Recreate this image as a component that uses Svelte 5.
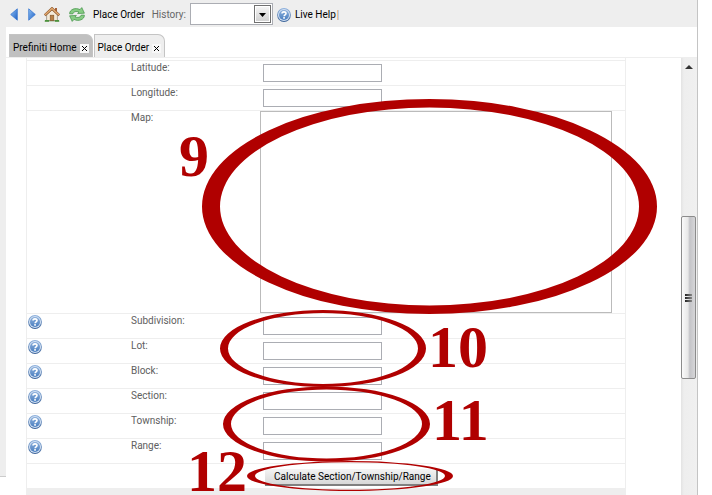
<script>
  const fields = [
    { id: 'latitude', label: 'Latitude:', help: false },
    { id: 'longitude', label: 'Longitude:', help: false },
    { id: 'map', label: 'Map:', help: false, map: true },
    { id: 'subdivision', label: 'Subdivision:', help: true },
    { id: 'lot', label: 'Lot:', help: true },
    { id: 'block', label: 'Block:', help: true },
    { id: 'section', label: 'Section:', help: true },
    { id: 'township', label: 'Township:', help: true },
    { id: 'range', label: 'Range:', help: true }
  ];
</script>

{#snippet helpIcon()}
  <svg width="14" height="14" viewBox="0 0 14 14" aria-hidden="true">
    <defs>
      <linearGradient id="ring" x1="0" y1="0" x2="0" y2="1">
        <stop offset="0" stop-color="#8fb2de" />
        <stop offset="1" stop-color="#3a6298" />
      </linearGradient>
      <linearGradient id="disc" x1="0" y1="0" x2="0" y2="1">
        <stop offset="0" stop-color="#8cb0dc" />
        <stop offset="1" stop-color="#4b7fc0" />
      </linearGradient>
    </defs>
    <circle cx="7" cy="7" r="6.9" fill="url(#ring)" />
    <circle cx="7" cy="7" r="6" fill="#d3e1f3" />
    <circle cx="7" cy="7" r="5" fill="url(#disc)" />
    <path d="M5 5.6C5 3.3 9 3.3 9 5.5C9 6.9 7.1 6.8 7.1 8.3" fill="none" stroke="#fff" stroke-width="1.6" />
    <rect x="6.2" y="9.1" width="1.7" height="1.6" fill="#fff" />
  </svg>
{/snippet}

<div class="app">
  <div class="window">
    <header class="toolbar">
      <button class="tool" aria-label="Back">
        <svg width="8" height="13" viewBox="0 0 8 13">
          <defs>
            <linearGradient id="arrow" x1="0" y1="0" x2="1" y2="1">
              <stop offset="0" stop-color="#8fc0f4" />
              <stop offset="1" stop-color="#1c5fc4" />
            </linearGradient>
          </defs>
          <path d="M7.3.8V12.2L.7 6.5Z" fill="url(#arrow)" stroke="#3b78d0" stroke-width=".8" />
        </svg>
      </button>
      <button class="tool forward" aria-label="Forward">
        <svg width="8" height="13" viewBox="0 0 8 13">
          <path d="M.7.8V12.2L7.3 6.5Z" fill="url(#arrow)" stroke="#3b78d0" stroke-width=".8" />
        </svg>
      </button>
      <button class="tool home" aria-label="Home">
        <svg width="16" height="15" viewBox="0 0 16 15">
          <path d="M0 14.2C2 12.4 14 12.4 16 14.2Z" fill="#5fa04e" />
          <rect x="11" y="1" width="2" height="4" fill="#a5623a" />
          <path d="M2.6 7.5L8 2.6L13.4 7.5V13.6H2.6Z" fill="#f4ead8" stroke="#8e8374" stroke-width=".7" />
          <path d="M.7 8.3L8 1.5L15.3 8.3" fill="none" stroke="#8a5426" stroke-width="2.6" />
          <path d="M.9 8L8 1.5L15.1 8" fill="none" stroke="#e2a870" stroke-width="1.5" />
          <rect x="6.2" y="8.2" width="3.6" height="5.4" fill="#b98046" stroke="#7d5229" stroke-width=".6" />
          <path d="M1 13.9H5M11 13.9H15" stroke="#4c913c" stroke-width="1.6" />
        </svg>
      </button>
      <button class="tool refresh" aria-label="Refresh">
        <svg width="16" height="15" viewBox="0 0 16 15">
          <g fill="#86cb83" stroke="#419146" stroke-width=".7">
            <path d="M.6 6.8C.6 2.4 6.4.2 11 2.6L12.8.6L15.4 6.2L8.6 6.6L10 5C7.4 3.9 4.2 4.6 3.8 6.9Z" />
            <path d="M15.4 8.2C15.4 12.6 9.6 14.8 5 12.4L3.2 14.4L.6 8.8L7.4 8.4L6 10C8.6 11.1 11.8 10.4 12.2 8.1Z" />
          </g>
        </svg>
      </button>
      <span class="current">Place Order</span>
      <label class="history" for="history">History:</label>
      <span class="combo">
        <select id="history"><option></option></select>
        <svg class="drop" width="17" height="18" viewBox="0 0 17 18" aria-hidden="true">
          <defs>
            <linearGradient id="face" x1="0" y1="0" x2="0" y2="1">
              <stop offset="0" stop-color="#f4f4f4" />
              <stop offset="1" stop-color="#d2d2d2" />
            </linearGradient>
          </defs>
          <rect x=".5" y=".5" width="16" height="17" fill="#fff" stroke="#707070" />
          <rect x="2" y="2" width="13" height="14" fill="url(#face)" />
          <path d="M5 8H12L8.5 12Z" fill="#000" />
        </svg>
      </span>
      <button class="tool live">{@render helpIcon()}<span>Live Help</span></button>
      <span class="divider"></span>
    </header>

    <div class="body">
      <div class="gutter"></div>
      <main>
        <nav class="tabs">
          <div class="tab active"><a href="#home">Prefiniti Home</a><button class="close" aria-label="Close Prefiniti Home"><svg width="5" height="5" viewBox="0 0 5 5"><path d="M0 0L5 5M5 0L0 5" stroke="#000" /></svg></button></div>
          <div class="tab"><a href="#order">Place Order</a><button class="close" aria-label="Close Place Order"><svg width="5" height="5" viewBox="0 0 5 5"><path d="M0 0L5 5M5 0L0 5" stroke="#000" /></svg></button></div>
        </nav>
        <div class="pane">
          <div class="sheet">
            <form>
              {#each fields as f}
                <div class="row">
                  <div class="help">
                    {#if f.help}<button type="button" class="tool" aria-label="Help for {f.id}">{@render helpIcon()}</button>{/if}
                  </div>
                  {#if f.map}
                    <span class="label" id="map-label">{f.label}</span>
                    <div class="map" role="region" aria-labelledby="map-label"></div>
                  {:else}
                    <label class="label" for={f.id}>{f.label}</label>
                    <input id={f.id} type="text" />
                  {/if}
                </div>
              {/each}
              <div class="row last"><button type="button" class="calc">Calculate Section/Township/Range</button></div>
              <div class="foot"></div>
            </form>
          </div>
          <div class="scrollbar" aria-hidden="true">
            <svg class="up" width="8" height="4" viewBox="0 0 8 4"><path d="M0 4L4 0L8 4Z" fill="#333" /></svg>
            <div class="thumb"><i></i><i></i><i></i></div>
          </div>
        </div>
      </main>
    </div>
  </div>

  <svg class="marks" width="712" height="495" viewBox="0 0 712 495">
    <g fill="#b00000" fill-rule="evenodd">
      <path d="M202 206.5a227.5 107.5 0 1 0 455 0a227.5 107.5 0 1 0-455 0ZM220 206.5a209.5 99 0 1 0 419 0a209.5 99 0 1 0-419 0Z" />
      <path d="M220 348.5a103 38.5 0 1 0 206 0a103 38.5 0 1 0-206 0ZM228 348.5a95 35.5 0 1 0 190 0a95 35.5 0 1 0-190 0Z" />
      <path d="M223 424a103.5 37.5 0 1 0 207 0a103.5 37.5 0 1 0-207 0ZM231 424a95.5 34.5 0 1 0 191 0a95.5 34.5 0 1 0-191 0Z" />
      <path d="M247 476a103 15 0 1 0 206 0a103 15 0 1 0-206 0ZM255 476a95 13.8 0 1 0 190 0a95 13.8 0 1 0-190 0Z" />
      <text x="179" y="176">9</text>
      <text x="428" y="367">10</text>
      <text x="432" y="440">11</text>
      <text x="187" y="491">12</text>
    </g>
  </svg>
</div>

<style>
  :global(body) { background: #fff; }
  .app {
    position: relative;
    height: 100vh;
    overflow: hidden;
    padding-right: 14px;
    box-sizing: border-box;
    font: 10px/14px Roboto, "Open Sans", sans-serif;
    color: #000;
  }
  .window {
    display: flex;
    flex-direction: column;
    height: 100%;
    box-sizing: border-box;
    border-right: 1px solid #c4c4c4;
  }
  button { font: inherit; color: inherit; padding: 0; border: 0; background: none; }
  svg { display: block; }
  .toolbar {
    display: flex;
    align-items: center;
    height: 27px;
    flex: none;
    padding: 2px 0 0 10px;
    box-sizing: border-box;
    background: #eee;
  }
  .forward { margin-left: 10px; }
  .home { margin-left: 8px; }
  .refresh { margin-left: 9px; }
  .current { margin-left: 8px; }
  .history { margin-left: 7px; color: #666; }
  .combo { position: relative; margin: 0 0 2px 4px; }
  .combo select {
    display: block;
    appearance: none;
    width: 83px;
    height: 22px;
    border: 1px solid #abadb3;
    border-radius: 0;
    background: #fff;
  }
  .drop { position: absolute; right: 2px; top: 2px; pointer-events: none; }
  .live { display: flex; align-items: center; gap: 4px; margin-left: 4px; }
  .divider { width: 2px; height: 10px; margin-left: 1px; background: linear-gradient(90deg, #f3c08c 50%, #b9cde6 50%); }

  .body { display: flex; flex: 1; min-height: 0; }
  .gutter { flex: none; width: 6px; margin-bottom: 18px; background: #eee; border-bottom: 1px solid #ccc; box-sizing: border-box; }
  main { flex: 1; display: flex; flex-direction: column; min-width: 0; }
  .tabs { display: flex; gap: 1px; flex: none; padding: 7px 0 0 3px; border-bottom: 1px solid #eee; }
  .tab {
    display: flex;
    align-items: center;
    gap: 3px;
    height: 23px;
    padding: 4px 3px 0 3px;
    box-sizing: border-box;
    border: 1px solid #c4c4c4;
    border-bottom: 0;
    border-radius: 0 7px 0 0;
    background: #eee;
  }
  .tab.active { background: #c0c0c0; }
  .tab a { color: #000; text-decoration: none; }
  .close { display: grid; place-items: center; width: 9px; height: 9px; background: #f8f8f8; }

  .pane { flex: 1; display: flex; min-height: 0; }
  .sheet { flex: 1; min-width: 0; overflow: hidden; padding-left: 20px; }
  form {
    max-width: 600px;
    box-sizing: border-box;
    padding-top: 2px;
    border: 1px solid #eee;
    border-width: 0 1px;
  }
  .row { display: flex; align-items: flex-start; min-height: 25px; box-sizing: border-box; border-top: 1px solid #eee; }
  .help { width: 104px; padding: 1px; box-sizing: border-box; }
  .label { width: 129px; color: #606060; }
  .row input {
    width: 119px;
    height: 18px;
    margin: 3px;
    padding: 0 2px;
    box-sizing: border-box;
    border: 1px solid #abadb3;
    border-radius: 0;
    background: #fff;
    font: inherit;
  }
  .map { width: 352px; height: 202px; box-sizing: border-box; border: 1px solid #bbb; }
  .last { padding: 5px 0 0 238px; }
  .calc {
    height: 17px;
    padding: 0 5px 0 9px;
    background: linear-gradient(#f4f4f4, #d8d8d8);
    border: solid #808080;
    border-width: 0 2px 2px 0;
    line-height: 15px;
  }
  .foot { height: 20px; background: #eee; }

  .scrollbar { flex: none; width: 16px; box-sizing: border-box; padding-top: 7px; background: linear-gradient(90deg, #e3e3e3, #eee 3px, #f0f0f0); }
  .up { margin: 0 0 147px 4px; }
  .thumb {
    display: flex;
    flex-direction: column;
    align-items: center;
    justify-content: center;
    gap: 1px;
    width: 15px;
    height: 163px;
    box-sizing: border-box;
    border: 1px solid #8c8c8c;
    border-radius: 2px;
    background: linear-gradient(90deg, #fafafa, #e8e8e8 45%, #c4c4c8 60%, #d6d6d8);
  }
  .thumb i { width: 7px; height: 2px; background: linear-gradient(90deg, #222, #888); }

  .marks { position: absolute; left: 0; top: 0; pointer-events: none; }
  .marks text { font: bold 60px "Liberation Serif", serif; }
</style>
